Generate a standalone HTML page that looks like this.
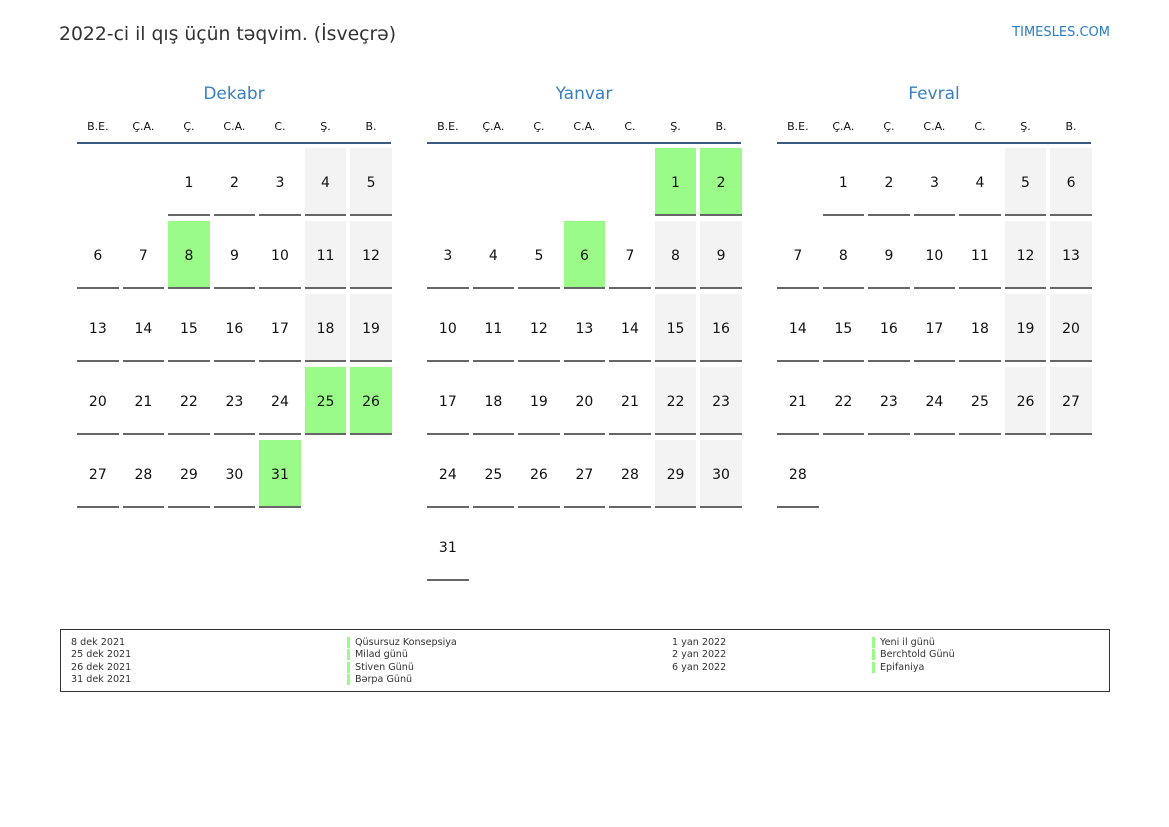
<!DOCTYPE html>
<html><head><meta charset="utf-8"><style>
*{margin:0;padding:0;box-sizing:border-box}
body{width:1169px;height:827px;background:#fff;font-family:"DejaVu Sans","Liberation Sans",sans-serif;position:relative;overflow:hidden;color:#111}
.t{position:absolute;left:59px;top:24px;font-size:18.8px;color:#333}
.logo{position:absolute;right:59px;top:25px;font-size:13px;color:#2a7dc4}
.m{position:absolute;top:84px;width:314px}
.mt{text-align:center;font-size:17px;color:#3a7fc1;height:22px}
.wd{display:grid;grid-template-columns:repeat(7,41.7px);column-gap:3.85px;margin-top:14px;font-size:11px;text-align:center;height:22px}
.ln{height:2px;background:#3b5a80}
.g{display:grid;grid-template-columns:repeat(7,41.7px);column-gap:3.85px;row-gap:5px;grid-auto-rows:68px;margin-top:4px}
.g div{font-size:14px;display:flex;align-items:center;justify-content:center;border-bottom:2px solid #666;padding-top:4px}
.g .w{background:#f3f3f3}
.g .h{background:#9afb89}
.lg{position:absolute;left:60px;top:629px;width:1050px;height:63px;border:1px solid #333;font-size:9.6px;color:#333;line-height:12.4px}
.c{position:absolute;top:7px}
.c.n span{display:block;border-left:3px solid #9afb89;padding-left:5px;height:11px;margin-bottom:1.4px;line-height:11px}
</style></head><body>
<div class="t">2022-ci il qış üçün təqvim. (İsveçrə)</div>
<div class="logo">TIMESLES.COM</div>

<div class="m" style="left:77px"><div class="mt">Dekabr</div>
<div class="wd"><span>B.E.</span><span>Ç.A.</span><span>Ç.</span><span>C.A.</span><span>C.</span><span>Ş.</span><span>B.</span></div><div class="ln"></div>
<div class="g"><i></i><i></i><div>1</div><div>2</div><div>3</div><div class="w">4</div><div class="w">5</div>
<div>6</div><div>7</div><div class="h">8</div><div>9</div><div>10</div><div class="w">11</div><div class="w">12</div>
<div>13</div><div>14</div><div>15</div><div>16</div><div>17</div><div class="w">18</div><div class="w">19</div>
<div>20</div><div>21</div><div>22</div><div>23</div><div>24</div><div class="h">25</div><div class="h">26</div>
<div>27</div><div>28</div><div>29</div><div>30</div><div class="h">31</div></div></div>

<div class="m" style="left:427px"><div class="mt">Yanvar</div>
<div class="wd"><span>B.E.</span><span>Ç.A.</span><span>Ç.</span><span>C.A.</span><span>C.</span><span>Ş.</span><span>B.</span></div><div class="ln"></div>
<div class="g"><i></i><i></i><i></i><i></i><i></i><div class="h">1</div><div class="h">2</div>
<div>3</div><div>4</div><div>5</div><div class="h">6</div><div>7</div><div class="w">8</div><div class="w">9</div>
<div>10</div><div>11</div><div>12</div><div>13</div><div>14</div><div class="w">15</div><div class="w">16</div>
<div>17</div><div>18</div><div>19</div><div>20</div><div>21</div><div class="w">22</div><div class="w">23</div>
<div>24</div><div>25</div><div>26</div><div>27</div><div>28</div><div class="w">29</div><div class="w">30</div>
<div>31</div></div></div>

<div class="m" style="left:777px"><div class="mt">Fevral</div>
<div class="wd"><span>B.E.</span><span>Ç.A.</span><span>Ç.</span><span>C.A.</span><span>C.</span><span>Ş.</span><span>B.</span></div><div class="ln"></div>
<div class="g"><i></i><div>1</div><div>2</div><div>3</div><div>4</div><div class="w">5</div><div class="w">6</div>
<div>7</div><div>8</div><div>9</div><div>10</div><div>11</div><div class="w">12</div><div class="w">13</div>
<div>14</div><div>15</div><div>16</div><div>17</div><div>18</div><div class="w">19</div><div class="w">20</div>
<div>21</div><div>22</div><div>23</div><div>24</div><div>25</div><div class="w">26</div><div class="w">27</div>
<div>28</div></div></div>

<div class="lg">
<div class="c" style="left:10px">8 dek 2021<br>25 dek 2021<br>26 dek 2021<br>31 dek 2021</div>
<div class="c n" style="left:286px"><span>Qüsursuz Konsepsiya</span><span>Milad günü</span><span>Stiven Günü</span><span>Bərpa Günü</span></div>
<div class="c" style="left:611px">1 yan 2022<br>2 yan 2022<br>6 yan 2022</div>
<div class="c n" style="left:811px"><span>Yeni il günü</span><span>Berchtold Günü</span><span>Epifaniya</span></div>
</div>
</body></html>
